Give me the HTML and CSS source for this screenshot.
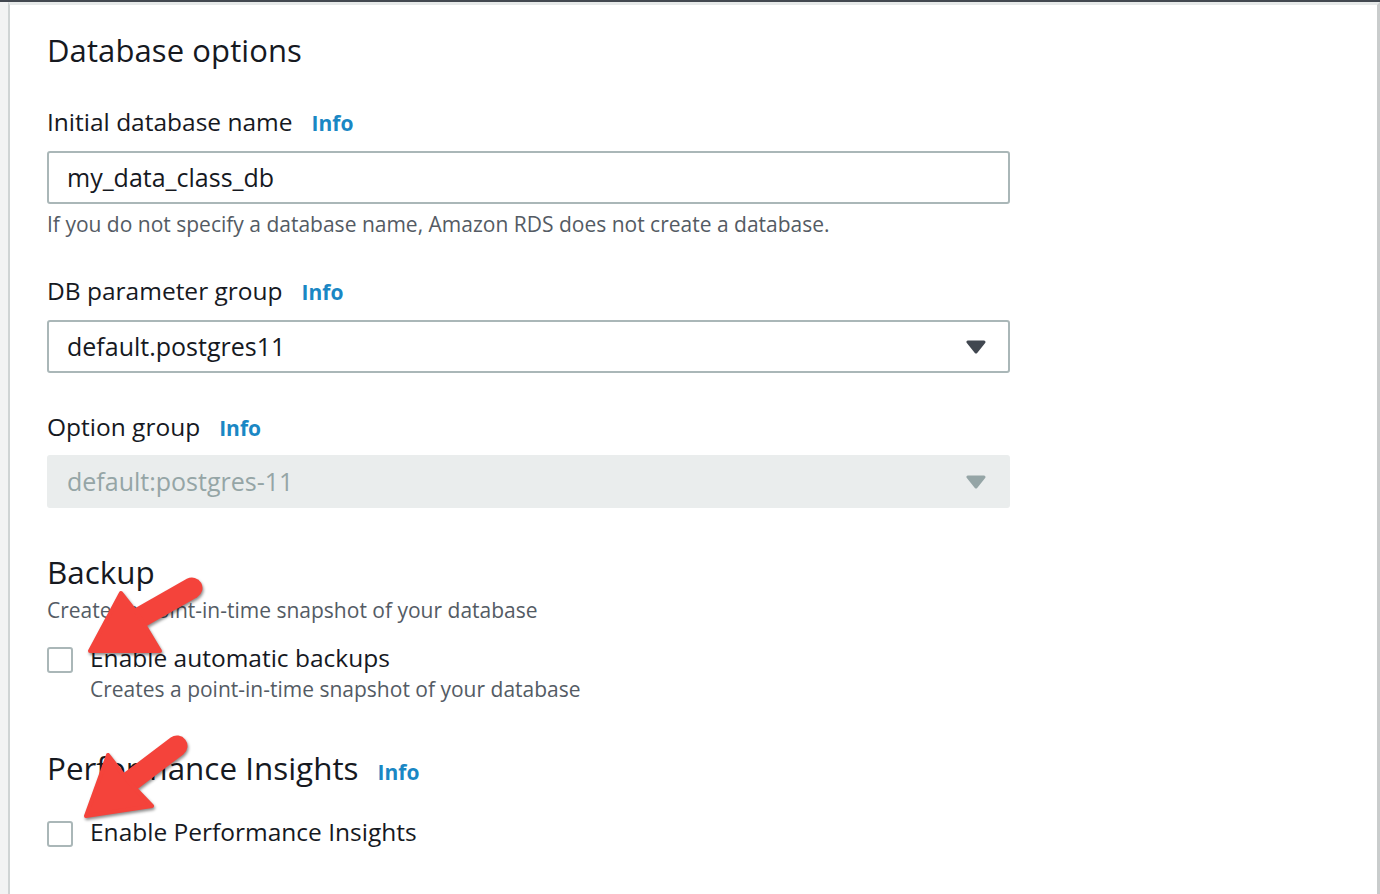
FILE: index.html
```html
<!DOCTYPE html>
<html>
<head>
<meta charset="utf-8">
<link rel="stylesheet" href="styles.css">
</head>
<body>
<div class="page">
  <div class="card">
    <h2 class="h-title">Database options</h2>

    <div class="label first"><span>Initial database name</span><a class="info">Info</a></div>
    <div class="input">my_data_class_db</div>
    <div class="help">If you do not specify a database name, Amazon RDS does not create a database.</div>

    <div class="label second"><span>DB parameter group</span><a class="info">Info</a></div>
    <div class="select"><span>default.postgres11</span><svg class="caret" viewBox="0 0 20 14"><path d="M2 2 L18 2 L10 12 Z" fill="#414750" stroke="#414750" stroke-width="3" stroke-linejoin="round"/></svg></div>

    <div class="label third"><span>Option group</span><a class="info">Info</a></div>
    <div class="select disabled"><span>default:postgres-11</span><svg class="caret" viewBox="0 0 20 14"><path d="M2 2 L18 2 L10 12 Z" fill="#95a5a6" stroke="#95a5a6" stroke-width="3" stroke-linejoin="round"/></svg></div>

    <h2 class="h-section backup">Backup</h2>
    <div class="desc">Creates a point-in-time snapshot of your database</div>
    <div class="check first-check">
      <span class="box"></span>
      <div class="check-text">
        <div class="check-label">Enable automatic backups</div>
        <div class="check-sub">Creates a point-in-time snapshot of your database</div>
      </div>
    </div>

    <div class="h-row"><h2 class="h-section">Performance Insights</h2><a class="info">Info</a></div>
    <div class="check second-check">
      <span class="box"></span>
      <div class="check-text">
        <div class="check-label">Enable Performance Insights</div>
      </div>
    </div>
  </div>
</div>
<svg class="arrows" width="1380" height="894" viewBox="0 0 1380 894">
  <g class="arrow" fill="#f4433b" stroke="#f4433b">
    <line x1="134" y1="621" x2="192" y2="588" stroke-width="21" stroke-linecap="round"/>
    <polygon points="90,651 121,593 139,616 160,651" stroke-width="4" stroke-linejoin="round"/>
  </g>
  <g class="arrow" fill="#f4433b" stroke="#f4433b">
    <line x1="124" y1="786" x2="177" y2="746" stroke-width="21" stroke-linecap="round"/>
    <polygon points="86,816 108,755 129,782 152,806" stroke-width="4" stroke-linejoin="round"/>
  </g>
</svg>
</body>
</html>
```
FILE: styles.css
```css
html, body {
  margin: 0;
  padding: 0;
}
body {
  width: 1380px;
  height: 894px;
  overflow: hidden;
  background: #f2f3f3;
  font-family: "Open Sans", "Liberation Sans", sans-serif;
  color: #16191f;
  position: relative;
}
.page {
  height: 894px;
  border-top: 2px solid #424850;
  box-sizing: border-box;
  padding-left: 8px;
  display: flex;
  flex-direction: column;
}
.card {
  flex: 1;
  background: #fff;
  border-left: 2px solid #cfd4d4;
  border-right: 3px solid #c9cccc;
  border-top: 3px solid #e6e9e9;
  padding: 25px 0 0 37px;
  box-sizing: border-box;
}
.h-title {
  margin: 0;
  font-size: 31px;
  font-weight: 400;
  line-height: 40px;
  letter-spacing: 0.1px;
}
.label {
  display: flex;
  align-items: baseline;
  font-size: 24.5px;
  line-height: 34px;
}
.label.first { margin-top: 35px; }
.label.second { margin-top: 36px; }
.label.third { margin-top: 37px; }
.info {
  color: #1a87c4;
  font-weight: 700;
  font-size: 21px;
  margin-left: 19px;
}
.input, .select {
  width: 963px;
  height: 53px;
  box-sizing: border-box;
  border: 2px solid #aab7b8;
  border-radius: 3px;
  padding-left: 18px;
  font-size: 25px;
  line-height: 49px;
  margin-top: 11px;
  display: flex;
  align-items: center;
  justify-content: space-between;
}
.select {
  padding-right: 22px;
}
.caret {
  width: 20px;
  height: 14px;
}
.select.disabled {
  background: #eaeded;
  border-color: #eaeded;
  color: #95a5a6;
  margin-top: 10px;
}
.help {
  font-size: 21px;
  line-height: 28px;
  color: #545b64;
  margin-top: 6px;
}
.h-section {
  margin: 0;
  font-size: 31.4px;
  font-weight: 400;
  line-height: 40px;
}
.backup { margin-top: 44px; }
.desc {
  font-size: 21px;
  line-height: 28px;
  color: #545b64;
  margin-top: 4px;
}
.check {
  display: flex;
  align-items: flex-start;
}
.first-check { margin-top: 19px; }
.second-check { margin-top: 29px; }
.box {
  width: 26px;
  height: 26px;
  box-sizing: border-box;
  border: 2px solid #aab7b8;
  border-radius: 3px;
  margin-top: 4px;
  flex: none;
}
.check-text {
  margin-left: 17px;
}
.check-label {
  font-size: 24.5px;
  line-height: 30px;
}
.check-sub {
  font-size: 21px;
  line-height: 28px;
  color: #545b64;
  margin-top: 2px;
}
.h-row {
  display: flex;
  align-items: baseline;
  margin-top: 45px;
}
.arrows {
  position: absolute;
  left: 0;
  top: 0;
  pointer-events: none;
}
.arrow {
  filter: drop-shadow(1px 2px 1.5px rgba(0, 0, 0, 0.45));
}
```
